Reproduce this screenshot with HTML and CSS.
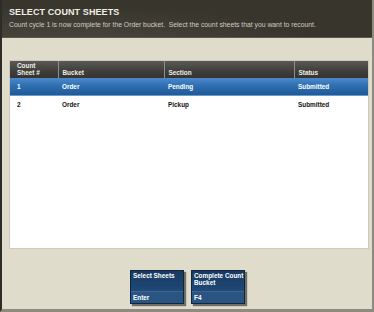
FILE: index.html
```html
<!DOCTYPE html>
<html lang="en">
<head>
    <meta charset="UTF-8">
    <title>Select Count Sheets</title>
    <link rel="stylesheet" href="styles.css">
</head>
<body>
    <div class="window">
        <div class="header">
            <h1>SELECT COUNT SHEETS</h1>
            <p>Count cycle 1 is now complete for the Order bucket.&nbsp; Select the count sheets that you want to recount.</p>
        </div>

        <div class="content">
            <div class="panel">
                <table class="sheets">
                    <thead>
                        <tr>
                            <th class="col-num">Count<br>Sheet #</th>
                            <th class="col-bucket">Bucket</th>
                            <th class="col-section">Section</th>
                            <th class="col-status">Status</th>
                        </tr>
                    </thead>
                    <tbody>
                        <tr class="selected">
                            <td>1</td>
                            <td>Order</td>
                            <td>Pending</td>
                            <td>Submitted</td>
                        </tr>
                        <tr>
                            <td>2</td>
                            <td>Order</td>
                            <td>Pickup</td>
                            <td>Submitted</td>
                        </tr>
                    </tbody>
                </table>
            </div>

            <div class="actions">
                <button class="action-btn">
                    <span class="btn-label">Select Sheets</span>
                    <span class="btn-key">Enter</span>
                </button>
                <button class="action-btn">
                    <span class="btn-label">Complete Count<br>Bucket</span>
                    <span class="btn-key">F4</span>
                </button>
            </div>
        </div>
    </div>
</body>
</html>
```

FILE: styles.css
```css
html, body {
    margin: 0;
    padding: 0;
}

body {
    font-family: "Liberation Sans", Arial, sans-serif;
    background-color: #2a2822;
    width: 374px;
    height: 312px;
    overflow: hidden;
}

.window {
    box-sizing: border-box;
    width: 374px;
    height: 312px;
    border-left: 2px solid #2e2c26;
    border-right: 2px solid #8d8a80;
    border-bottom: 3px solid #8d8a80;
    background-color: #e0dccc;
    display: flex;
    flex-direction: column;
}

/* Header */
.header {
    height: 38px;
    box-sizing: border-box;
    padding: 7px 7px 0;
    background-color: #38352d;
    background-image: radial-gradient(ellipse 260px 40px at 60px 46px, #4a473e 0%, #413e35 55%, rgba(56, 53, 45, 0) 100%);
    border-bottom: 1px solid #5b584e;
}

.header h1 {
    margin: 0;
    font-size: 9px;
    font-weight: bold;
    color: #f0eee6;
    letter-spacing: 0.1px;
}

.header p {
    margin: 4px 0 0;
    font-size: 6.8px;
    color: #cfccc1;
}

.content {
    flex: 1;
    display: flex;
    flex-direction: column;
    padding: 22px 2px 0 7px;
}

/* Table panel */
.panel {
    width: 360px;
    height: 189px;
    background-color: #ffffff;
    border: 1px solid #cfcbbc;
    box-sizing: border-box;
}

.sheets {
    width: 100%;
    border-collapse: collapse;
    font-size: 6.4px;
    font-weight: bold;
}

.sheets th {
    height: 17px;
    box-sizing: border-box;
    padding: 1px 4px 2px;
    text-align: left;
    vertical-align: bottom;
    color: #f0eee8;
    background: linear-gradient(#5a5955, #3f3e3a 60%, #353431);
    border-left: 1px solid #8e8d88;
    line-height: 7px;
}

.sheets th:first-child {
    border-left: none;
    vertical-align: middle;
    padding-left: 7px;
}

.col-num { width: 48px; }
.col-bucket { width: 106px; }
.col-section { width: 130px; }

.sheets td {
    height: 17px;
    padding: 0 4px;
    color: #111;
    border-bottom: 1px solid #ffffff;
}

.sheets td:first-child {
    padding-left: 7px;
}

.sheets tr.selected td {
    height: 17px;
    color: #ffffff;
    background: linear-gradient(#4b89cb, #2f6fb0 45%, #1f5a98);
    border-bottom: 1px solid #6b9acb;
}

/* Buttons */
.actions {
    display: flex;
    justify-content: center;
    gap: 7px;
    margin-top: 21px;
    padding-right: 4px;
}

.action-btn {
    width: 54px;
    height: 34px;
    padding: 0;
    display: flex;
    flex-direction: column;
    border: 1px solid #0f2640;
    background-color: #1a3a60;
    box-shadow: 2px 2px 1px rgba(20, 20, 20, 0.55);
    font-family: "Liberation Sans", Arial, sans-serif;
    font-size: 6.4px;
    font-weight: bold;
    color: #ffffff;
    text-align: left;
    cursor: pointer;
}

.btn-label {
    flex: 1;
    padding: 2px 2px 0;
    line-height: 6.5px;
    white-space: nowrap;
    background: linear-gradient(#193a61, #1d4470 70%, #214a78);
    border-bottom: 1px solid #3d6590;
}

.btn-key {
    height: 11px;
    line-height: 11px;
    padding: 0 2px;
    background-color: #2a5482;
}
```
